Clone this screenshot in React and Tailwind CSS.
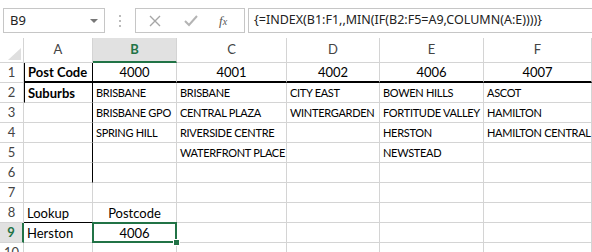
import React from 'react'

const cols = [
  { key: 'A', w: 'w-[69px] shrink-0' },
  { key: 'B', w: 'w-[84px] shrink-0' },
  { key: 'C', w: 'w-[110px] shrink-0' },
  { key: 'D', w: 'w-[93px] shrink-0' },
  { key: 'E', w: 'w-[104px] shrink-0' },
  { key: 'F', w: 'flex-1 min-w-0' },
]

const data = {
  1: { A: 'Post Code', B: '4000', C: '4001', D: '4002', E: '4006', F: '4007' },
  2: { A: 'Suburbs', B: 'BRISBANE', C: 'BRISBANE', D: 'CITY EAST', E: 'BOWEN HILLS', F: 'ASCOT' },
  3: { B: 'BRISBANE GPO', C: 'CENTRAL PLAZA', D: 'WINTERGARDEN', E: 'FORTITUDE VALLEY', F: 'HAMILTON' },
  4: { B: 'SPRING HILL', C: 'RIVERSIDE CENTRE', E: 'HERSTON', F: 'HAMILTON CENTRAL' },
  5: { C: 'WATERFRONT PLACE', E: 'NEWSTEAD' },
  8: { A: 'Lookup', B: 'Postcode' },
  9: { A: 'Herston', B: '4006' },
}

const centered = { 1: ['B', 'C', 'D', 'E', 'F'], 8: ['B'], 9: ['B'] }

function cellBorders(row, col) {
  let cls = 'border-r border-b border-[#d4d4d4]'
  if (row === 1) cls = 'border-r border-b-2 border-r-[#d4d4d4] border-b-black'
  if (col === 'A' && row >= 1 && row <= 6) {
    cls = row === 1 ? 'border-r border-b-2 border-r-black border-b-black' : 'border-r border-b border-r-black border-b-[#d4d4d4]'
  }
  if (col === 'A' && row === 8) cls = 'border-r border-b border-r-[#d4d4d4] border-b-black'
  if (col === 'A' && (row === 1 || row === 2)) cls += ' border-l border-l-black'
  return cls
}

function Cell({ row, col, w }) {
  const text = data[row]?.[col]
  const isCenter = centered[row]?.includes(col)
  const isBold = row <= 2 && col === 'A'
  const isCaps = row >= 2 && row <= 5 && col !== 'A'
  const selected = row === 9 && col === 'B'
  return (
    <div
      className={`relative box-border h-full ${w} ${cellBorders(row, col)} flex items-center whitespace-nowrap ${
        isCenter ? 'justify-center' : 'pl-[3px]'
      } ${isBold ? 'font-bold' : ''} ${isCaps ? 'text-[11px] tracking-[-0.3px]' : 'text-[13px]'} text-black ${
        selected ? 'z-10' : ''
      }`}
    >
      <span className="pt-[2px]">{text}</span>
      {selected && (
        <>
          <div className="absolute -left-px -top-px -right-px -bottom-px border-2 border-[#217346]" />
          <div className="absolute -right-[4px] -bottom-[4px] w-[7px] h-[7px] bg-[#217346] border border-white" />
        </>
      )}
    </div>
  )
}

function Row({ n }) {
  const sel = n === 9
  return (
    <div className="flex h-[20px]">
      <div
        className={`box-border w-[24px] shrink-0 h-full flex items-center justify-center text-[13px] border-b border-[#d4d4d4] ${
          sel ? 'bg-[#e1e1e1] text-[#217346] font-bold border-r-2 border-r-[#217346]' : 'border-r text-[#444]'
        }`}
      >
        {n}
      </div>
      {cols.map((c) => (
        <Cell key={c.key} row={n} col={c.key} w={c.w} />
      ))}
    </div>
  )
}

export default function App() {
  return (
    <div className="w-[592px] h-[252px] overflow-hidden bg-white font-['Lato','Liberation_Sans',sans-serif] select-none">
      {/* formula bar */}
      <div className="flex items-stretch h-[25px] mt-[8px] pl-[3px]">
        <div className="box-border w-[102px] shrink-0 border border-[#c6c6c6] flex items-center justify-between pl-[6px] pr-[6px]">
          <span className="text-[13px] text-[#222] font-['Noto_Sans',sans-serif]">B9</span>
          <span className="w-0 h-0 border-l-[4px] border-r-[4px] border-t-[4px] border-l-transparent border-r-transparent border-t-[#777]" />
        </div>
        <div className="w-[30px] shrink-0 flex flex-col items-center justify-center gap-[3px]">
          <span className="w-[2px] h-[2px] bg-[#bbb]" />
          <span className="w-[2px] h-[2px] bg-[#bbb]" />
          <span className="w-[2px] h-[2px] bg-[#bbb]" />
        </div>
        <div className="box-border w-[110px] shrink-0 border border-[#c6c6c6] flex items-center">
          <svg width="14" height="14" viewBox="0 0 14 14" className="ml-[12px]">
            <path d="M2 2 L12 12 M12 2 L2 12" stroke="#a6a6a6" strokeWidth="1.4" fill="none" />
          </svg>
          <svg width="16" height="14" viewBox="0 0 16 14" className="ml-[21px]">
            <path d="M2 7 L6 11 L14 2" stroke="#b4b4b4" strokeWidth="2" fill="none" />
          </svg>
          <span className="ml-[20px] text-[13px] italic text-[#555] font-['Liberation_Serif',serif]">
            f<span className="text-[10px]">x</span>
          </span>
        </div>
        <div className="box-border flex-1 min-w-0 ml-[3px] border-y border-l border-[#c6c6c6] flex items-center pl-[5px]">
          <span className="text-[12.5px] text-[#222] font-['Noto_Sans',sans-serif] whitespace-nowrap">
            {'{=INDEX(B1:F1,,MIN(IF(B2:F5=A9,COLUMN(A:E))))}'}
          </span>
        </div>
      </div>

      {/* column headers */}
      <div className="flex h-[25px] mt-[5px]">
        <div className="relative box-border w-[24px] shrink-0 h-full border-r border-b border-[#d4d4d4]">
          <svg width="14" height="13" viewBox="0 0 14 13" className="absolute left-[8px] top-[10px]">
            <polygon points="13,0 13,12 0,12" fill="#dfdfdf" />
          </svg>
        </div>
        {cols.map((c) => {
          const sel = c.key === 'B'
          return (
            <div
              key={c.key}
              className={`box-border ${c.w} h-full flex items-center justify-center text-[13px] border-r ${
                sel
                  ? 'bg-[#e1e1e1] text-[#217346] font-bold border-b-2 border-b-[#217346] border-r-[#d4d4d4]'
                  : 'text-[#444] border-b border-[#d4d4d4]'
              }`}
            >
              {c.key}
            </div>
          )
        })}
      </div>

      {[1, 2, 3, 4, 5, 6, 7, 8, 9, 10].map((n) => (
        <Row key={n} n={n} />
      ))}
    </div>
  )
}
